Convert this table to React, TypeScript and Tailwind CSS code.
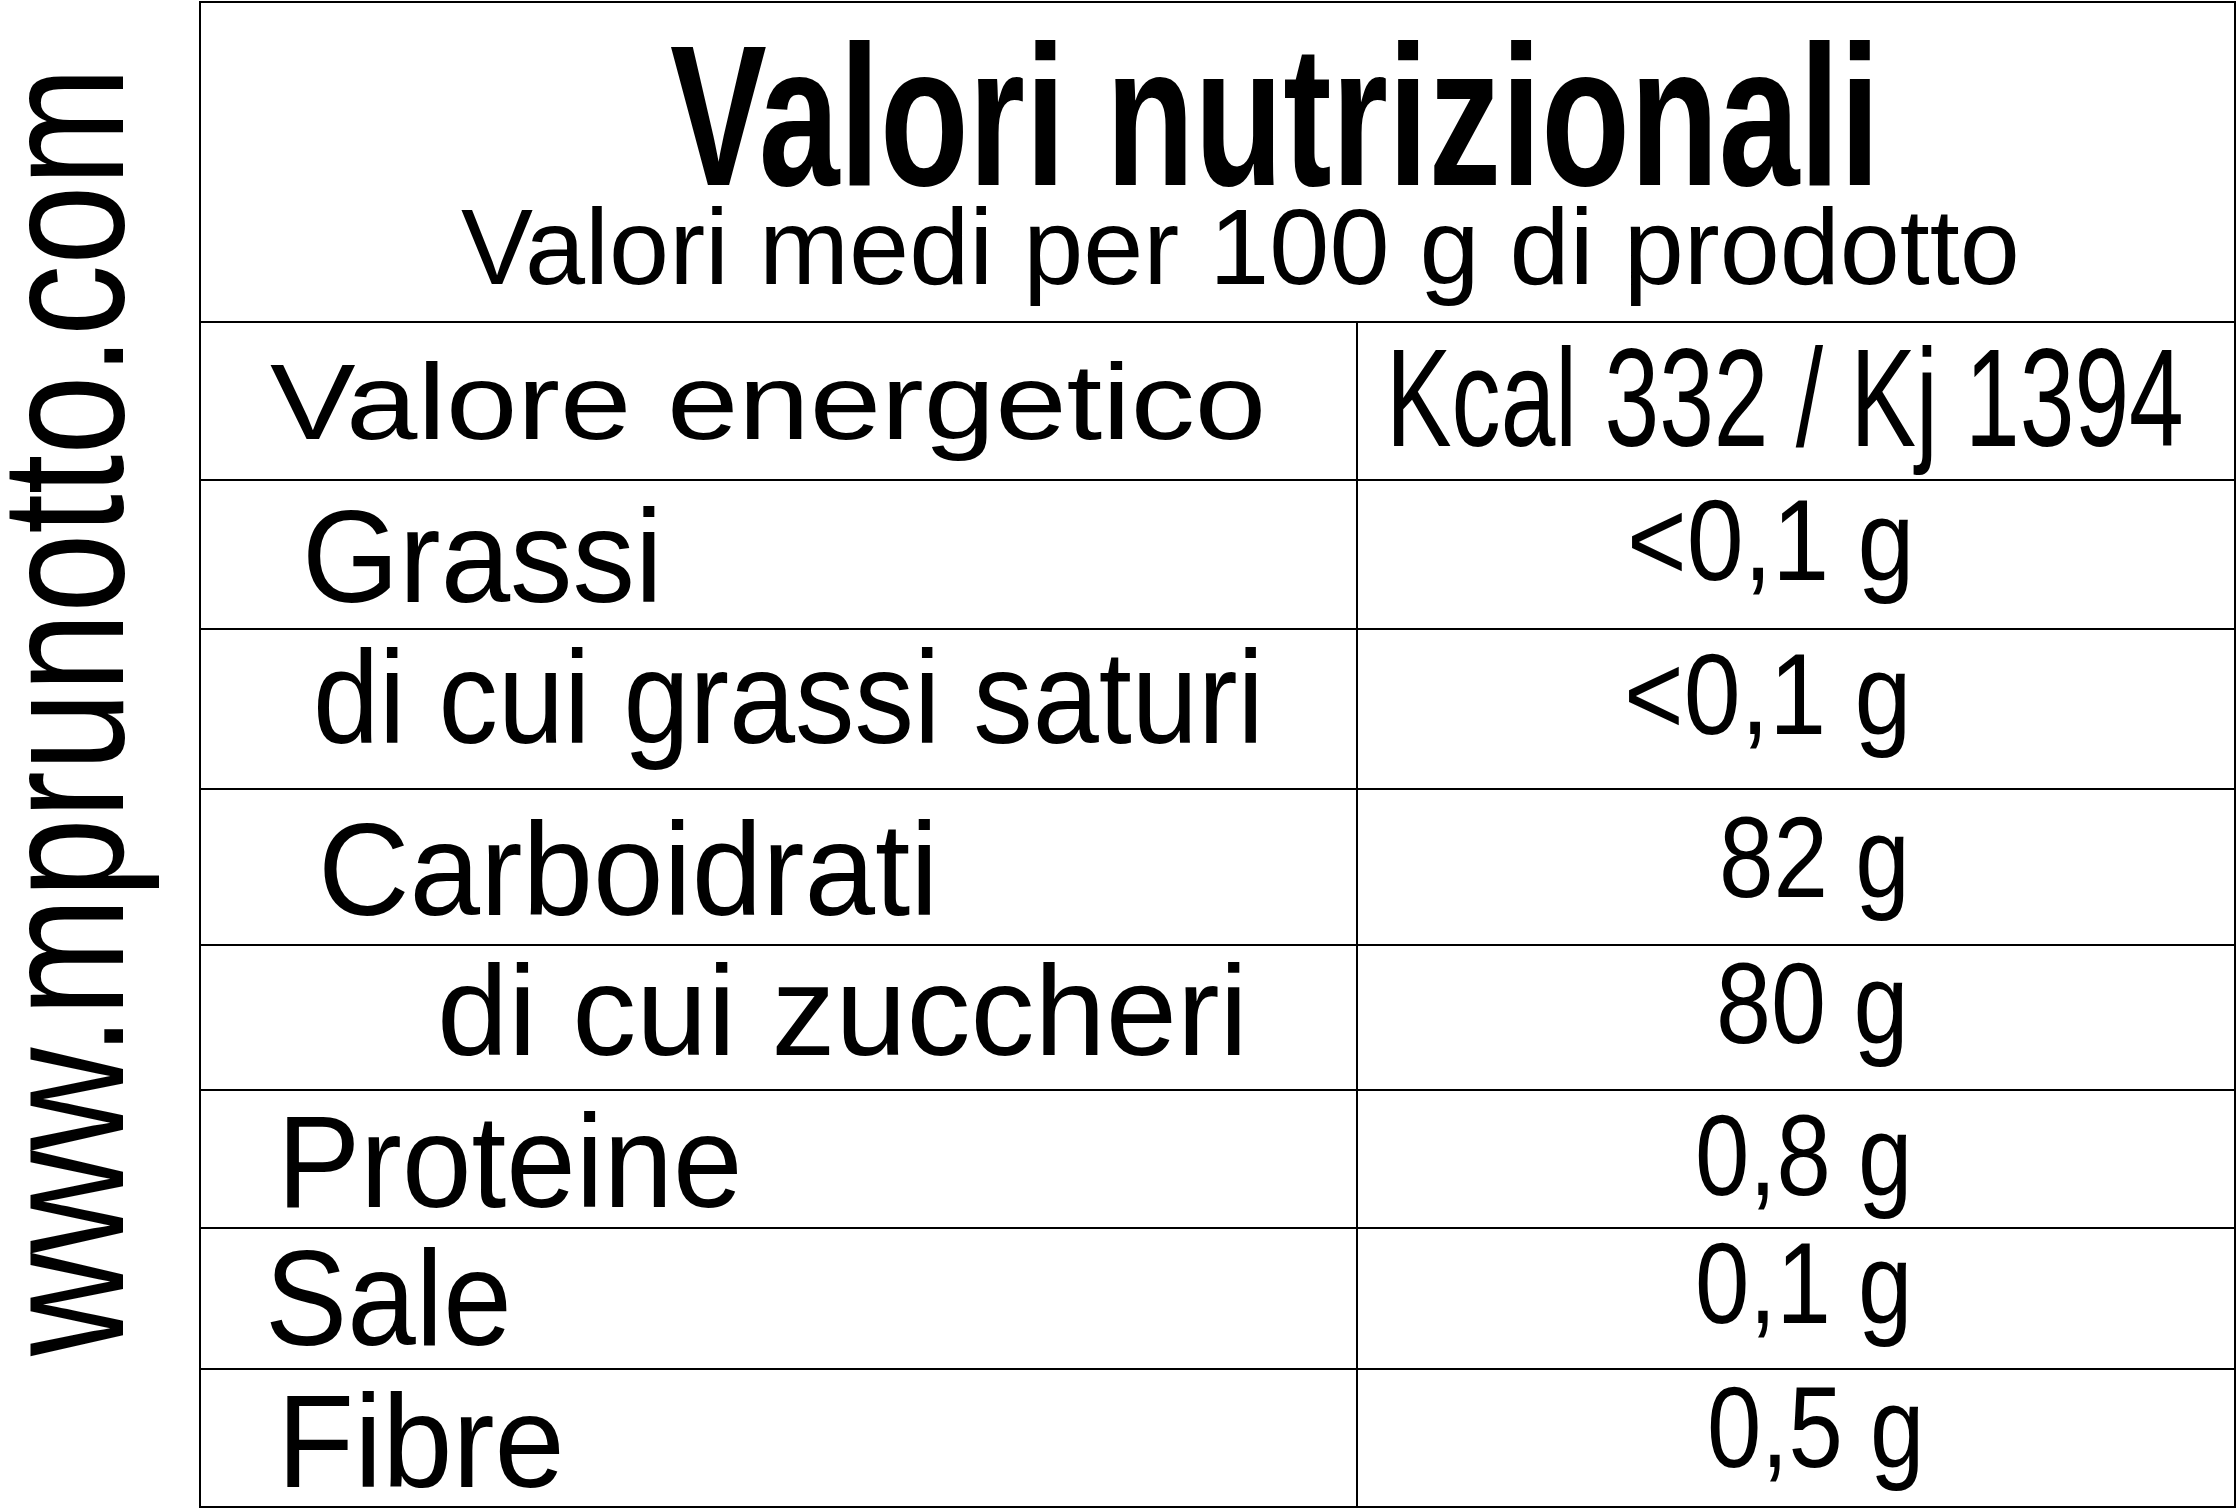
import type { ReactNode } from "react";

const SANS = "font-['Liberation_Sans',Arial,Helvetica,sans-serif]";

function Row({
  h,
  last,
  label,
  value,
}: {
  h: string;
  last?: boolean;
  label: ReactNode;
  value: ReactNode;
}) {
  return (
    <div className={`flex ${h} ${last ? "" : "border-b-2 border-black"}`}>
      <div className="w-[1157px] shrink-0 border-r-2 border-black">{label}</div>
      <div className="flex-1">{value}</div>
    </div>
  );
}

export default function App() {
  return (
    <div className={`flex w-[2240px] h-[1510px] bg-white text-black overflow-hidden ${SANS}`}>
      {/* Site name, reading bottom to top */}
      <div className="w-[199px] h-[1510px] shrink-0 flex flex-col justify-center items-start pb-[86px]">
        <div className="[writing-mode:vertical-rl] rotate-180 scale-y-[0.813] text-[175px] leading-[125px] whitespace-nowrap">
          www.mprunotto.com
        </div>
      </div>

      {/* Nutrition table */}
      <div className="mt-px w-[2037px] h-[1507px] shrink-0 border-2 border-black flex flex-col">
        <div className="h-[320px] shrink-0 border-b-2 border-black pt-[28px]">
          <div className="ml-[469px] w-max origin-left scale-x-[0.726] text-[200px] font-bold leading-[170px] whitespace-nowrap">
            Valori nutrizionali
          </div>
          <div className="ml-[260px] mt-[1px] w-max text-[108px] leading-[90px] whitespace-nowrap">
            Valori medi per 100 g di prodotto
          </div>
        </div>

        <Row
          h="h-[158px]"
          label={
            <div className="pt-[25px] pl-[69px]">
              <div className="w-max origin-left scale-x-[1.188] text-[108px] leading-none whitespace-nowrap">
                Valore energetico
              </div>
            </div>
          }
          value={
            <div className="pt-[5px] pl-[28px]">
              <div className="w-max origin-left scale-x-[0.702] text-[140px] leading-none whitespace-nowrap">
                Kcal 332 / Kj 1394
              </div>
            </div>
          }
        />

        <Row
          h="h-[149px]"
          label={
            <div className="pt-[10px] pl-[101px]">
              <div className="w-max origin-left scale-x-[0.953] text-[131px] leading-none whitespace-nowrap">
                Grassi
              </div>
            </div>
          }
          value={
            <div className="pt-[2px] pl-[269px]">
              <div className="w-max origin-left scale-x-[0.89] text-[115px] leading-none whitespace-nowrap">
                &lt;0,1 g
              </div>
            </div>
          }
        />

        <Row
          h="h-[160px]"
          label={
            <div className="pt-[2px] pl-[112px]">
              <div className="w-max origin-left scale-x-[0.907] text-[131px] leading-none whitespace-nowrap">
                di cui grassi saturi
              </div>
            </div>
          }
          value={
            <div className="pt-[7px] pl-[266px]">
              <div className="w-max origin-left scale-x-[0.89] text-[115px] leading-none whitespace-nowrap">
                &lt;0,1 g
              </div>
            </div>
          }
        />

        <Row
          h="h-[156px]"
          label={
            <div className="pt-[14px] pl-[117px]">
              <div className="w-max origin-left scale-x-[0.961] text-[132px] leading-none whitespace-nowrap">
                Carboidrati
              </div>
            </div>
          }
          value={
            <div className="pt-[10px] pl-[361px]">
              <div className="w-max origin-left scale-x-[0.853] text-[115px] leading-none whitespace-nowrap">
                82 g
              </div>
            </div>
          }
        />

        <Row
          h="h-[145px]"
          label={
            <div className="pt-[1px] pl-[236px]">
              <div className="w-max origin-left scale-x-[1.0] text-[128px] leading-none whitespace-nowrap">
                di cui zuccheri
              </div>
            </div>
          }
          value={
            <div className="pl-[358px]">
              <div className="w-max origin-left scale-x-[0.86] text-[115px] leading-none whitespace-nowrap">
                80 g
              </div>
            </div>
          }
        />

        <Row
          h="h-[138px]"
          label={
            <div className="pt-[5px] pl-[76px]">
              <div className="w-max origin-left scale-x-[0.954] text-[131px] leading-none whitespace-nowrap">
                Proteine
              </div>
            </div>
          }
          value={
            <div className="pt-[7px] pl-[337px]">
              <div className="w-max origin-left scale-x-[0.85] text-[115px] leading-none whitespace-nowrap">
                0,8 g
              </div>
            </div>
          }
        />

        <Row
          h="h-[141px]"
          label={
            <div className="pt-[2px] pl-[64px]">
              <div className="w-max origin-left scale-x-[0.913] text-[135px] leading-none whitespace-nowrap">
                Sale
              </div>
            </div>
          }
          value={
            <div className="pl-[337px]">
              <div className="-mt-[3px] w-max origin-left scale-x-[0.85] text-[115px] leading-none whitespace-nowrap">
                0,1 g
              </div>
            </div>
          }
        />

        <Row
          h="h-[136px]"
          last
          label={
            <div className="pt-[9px] pl-[76px]">
              <div className="w-max origin-left scale-x-[0.964] text-[131px] leading-[125px] whitespace-nowrap">
                Fibre
              </div>
            </div>
          }
          value={
            <div className="pl-[349px]">
              <div className="w-max origin-left scale-x-[0.85] text-[115px] leading-none whitespace-nowrap">
                0,5 g
              </div>
            </div>
          }
        />
      </div>
    </div>
  );
}
